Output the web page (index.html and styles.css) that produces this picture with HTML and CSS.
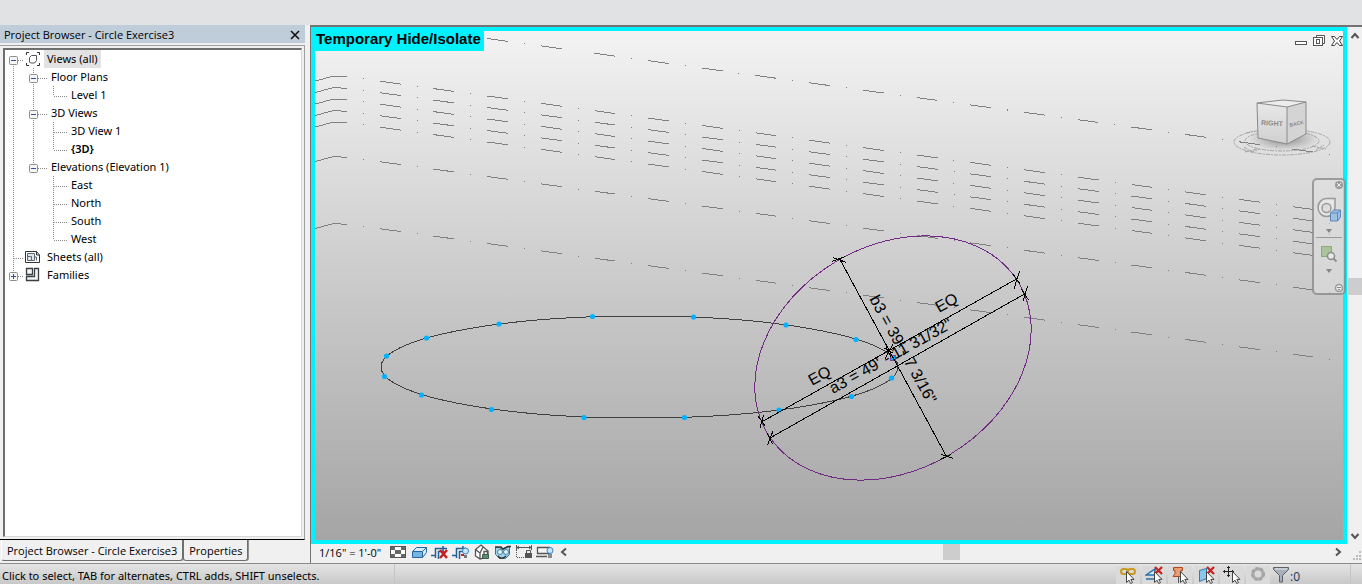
FILE: index.html
```html
<!DOCTYPE html>
<html lang="en">
<head>
    <meta charset="UTF-8">
    <meta name="viewport" content="width=device-width, initial-scale=1.0">
    <title>Circle Exercise3</title>
    <link rel="stylesheet" href="styles.css">
</head>
<body>
    <!-- Tree guide lines and shared icons -->
    <svg class="defs" width="0" height="0" aria-hidden="true">
        <defs>
            <g id="box">
                <rect x="5.5" y="6.5" width="8" height="8" rx="1" fill="#f6f6f6" stroke="#8e8e8e"/>
                <path d="M7 10.5h5" stroke="#3b4f9c"/>
            </g>
            <g id="cursor">
                <path d="M9.500 5.500v11l2.500-2.300 1.700 3.300 1.800-.9-1.700-3.200h3.200z" fill="#fff" stroke="#444"/>
            </g>
            <g id="redx">
                <path d="M10 1l7 7M17 1l-7 7" stroke="#c8201e" stroke-width="2.200"/>
            </g>
        </defs>
    </svg>

    <header class="ribbon"></header>

    <main class="workspace">
        <aside class="browser">
            <div class="browser-title">
                <h1>Project Browser - Circle Exercise3</h1>
                <button class="icon-btn close" aria-label="Close">
                    <svg width="10" height="10" viewBox="0 0 10 10"><path d="M1 1l8 8M9 1l-8 8" stroke="#111" stroke-width="1.600"/></svg>
                </button>
            </div>
            <div class="browser-frame">
                <ul class="tree">
                    <li>
                        <button class="guide" aria-label="Collapse Views"><svg width="20" height="18"><path class="dots" d="M9.500 14v4M14 10.500h6"/><use href="#box"/></svg></button>
                        <svg class="icon" width="18" height="18" viewBox="0 0 18 18"><path d="M5 2.500H2.500V5M13 2.500h2.500V5M5 15.500H2.500V13M13 15.500h2.500V13" fill="none" stroke="#333"/><path d="M5.500 7.500l2-2h5v5l-2 2.500h-4l-1-1z" fill="#fff" stroke="#555"/></svg>
                        <a class="selected" href="#">Views (all)</a>
                    </li>
                    <li>
                        <svg width="20" height="18"><path class="dots" d="M9.500 0v18"/></svg>
                        <button class="guide" aria-label="Collapse Floor Plans"><svg width="24" height="18"><path class="dots" d="M9.500 0v18M14 10.500h10"/><use href="#box"/></svg></button>
                        <a href="#">Floor Plans</a>
                    </li>
                    <li>
                        <svg width="44" height="18"><path class="dots" d="M9.500 0v18M29.500 0v18"/></svg>
                        <svg width="20" height="18"><path class="dots" d="M5.500 0v10M6 10.500h14"/></svg>
                        <a href="#">Level 1</a>
                    </li>
                    <li>
                        <svg width="20" height="18"><path class="dots" d="M9.500 0v18"/></svg>
                        <button class="guide" aria-label="Collapse 3D Views"><svg width="24" height="18"><path class="dots" d="M9.500 0v18M14 10.500h10"/><use href="#box"/></svg></button>
                        <a href="#">3D Views</a>
                    </li>
                    <li>
                        <svg width="44" height="18"><path class="dots" d="M9.500 0v18M29.500 0v18"/></svg>
                        <svg width="20" height="18"><path class="dots" d="M5.500 0v18M6 10.500h14"/></svg>
                        <a href="#">3D View 1</a>
                    </li>
                    <li>
                        <svg width="44" height="18"><path class="dots" d="M9.500 0v18M29.500 0v18"/></svg>
                        <svg width="20" height="18"><path class="dots" d="M5.500 0v10M6 10.500h14"/></svg>
                        <a class="current" href="#">{3D}</a>
                    </li>
                    <li>
                        <svg width="20" height="18"><path class="dots" d="M9.500 0v18"/></svg>
                        <button class="guide" aria-label="Collapse Elevations"><svg width="24" height="18"><path class="dots" d="M9.500 0v6M14 10.500h10"/><use href="#box"/></svg></button>
                        <a href="#">Elevations (Elevation 1)</a>
                    </li>
                    <li>
                        <svg width="44" height="18"><path class="dots" d="M9.500 0v18"/></svg>
                        <svg width="20" height="18"><path class="dots" d="M5.500 0v18M6 10.500h14"/></svg>
                        <a href="#">East</a>
                    </li>
                    <li>
                        <svg width="44" height="18"><path class="dots" d="M9.500 0v18"/></svg>
                        <svg width="20" height="18"><path class="dots" d="M5.500 0v18M6 10.500h14"/></svg>
                        <a href="#">North</a>
                    </li>
                    <li>
                        <svg width="44" height="18"><path class="dots" d="M9.500 0v18"/></svg>
                        <svg width="20" height="18"><path class="dots" d="M5.500 0v18M6 10.500h14"/></svg>
                        <a href="#">South</a>
                    </li>
                    <li>
                        <svg width="44" height="18"><path class="dots" d="M9.500 0v18"/></svg>
                        <svg width="20" height="18"><path class="dots" d="M5.500 0v10M6 10.500h14"/></svg>
                        <a href="#">West</a>
                    </li>
                    <li>
                        <svg width="20" height="18"><path class="dots" d="M9.500 0v18M10 10.500h10"/></svg>
                        <svg class="icon" width="18" height="18" viewBox="0 0 18 18"><path d="M1.500 3.500h11l3 3.500v7.500h-14z" fill="#fff" stroke="#333"/><path d="M12.500 3.500V7h3" fill="none" stroke="#333"/><path d="M3.500 5.500h7v7h-7zM3.500 8.500h4v4M10.500 9h2v3.500" fill="#dfe5ec" stroke="#5c6670"/></svg>
                        <a class="root" href="#">Sheets (all)</a>
                    </li>
                    <li>
                        <button class="guide" aria-label="Expand Families"><svg width="20" height="18"><path class="dots" d="M9.500 0v6M14 10.500h6"/><use href="#box"/><path d="M9.500 8v5" stroke="#3b4f9c"/></svg></button>
                        <svg class="icon" width="18" height="18" viewBox="0 0 18 18"><path d="M2.500 2.500h6v6h-6zM10.500 2.500h4v12h-12v-4h8z" fill="#f4f4f4" stroke="#3a3f46" stroke-width="1.300"/></svg>
                        <a class="root" href="#">Families</a>
                    </li>
                </ul>
            </div>
            <nav class="tabs">
                <button class="tab active">Project Browser - Circle Exercise3</button>
                <button class="tab">Properties</button>
            </nav>
        </aside>

        <section class="view">
            <div class="viewport">
                <svg class="drawing" viewBox="315 31 1028 509" preserveAspectRatio="xMinYMin slice">
                    <defs>
                        <g id="level">
                            <path d="M315 81L334 76L347 77"/>
                            <path class="dashdot" d="M347 76.700L1335 212.500" stroke-dashoffset="-16"/>
                        </g>
                        <linearGradient id="cubeLeft" x1="0" y1="0" x2="0" y2="1">
                            <stop offset="0" stop-color="#e8e8e8"/><stop offset="1" stop-color="#cfcfcf"/>
                        </linearGradient>
                        <radialGradient id="cubeShadow">
                            <stop offset="0" stop-color="#777" stop-opacity=".9"/><stop offset="1" stop-color="#999" stop-opacity="0"/>
                        </radialGradient>
                    </defs>

                    <!-- reference levels -->
                    <g class="levels">
                        <path class="dashdot first" d="M487 38.500L1335 155"/>
                        <use href="#level"/>
                        <use href="#level" y="11.500"/>
                        <use href="#level" y="23"/>
                        <use href="#level" y="34.500"/>
                        <use href="#level" y="46"/>
                        <use href="#level" y="80.500"/>
                        <use href="#level" y="147.500"/>
                    </g>

                    <!-- circles -->
                    <ellipse class="curve" cx="639.500" cy="367" rx="258.500" ry="51"/>
                    <g class="points">
                        <circle cx="592.500" cy="316.500" r="2.600"/><circle cx="693.500" cy="317" r="2.600"/>
                        <circle cx="786" cy="325" r="2.600"/><circle cx="856" cy="339.500" r="2.600"/>
                        <circle cx="891.500" cy="378" r="2.600"/><circle cx="851.500" cy="396.500" r="2.600"/>
                        <circle cx="779" cy="410" r="2.600"/><circle cx="684.500" cy="417.500" r="2.600"/>
                        <circle cx="584" cy="417.500" r="2.600"/><circle cx="491.500" cy="409.500" r="2.600"/>
                        <circle cx="421.500" cy="395" r="2.600"/><circle cx="384.500" cy="376.500" r="2.600"/>
                        <circle cx="386.500" cy="356" r="2.600"/><circle cx="426.500" cy="338" r="2.600"/>
                        <circle cx="499" cy="324" r="2.600"/>
                    </g>
                    <ellipse class="sketch" cx="893" cy="358" rx="146.500" ry="112" transform="rotate(-31 893 358)"/>
                    <rect class="center" x="890.500" y="355.500" width="5" height="5"/>

                    <!-- dimensions -->
                    <g class="dims">
                        <path d="M761.500 422L1016.500 279M770 438L1024.500 294M840 259.500L946.500 456.500"/>
                        <path d="M1019.500 271L1014 289M1013 274L1020 284M1027.500 286L1023 301M1021.500 289L1028.500 300"/>
                        <path d="M763.500 415L760 428M758 416L765 426M773 431L767.500 445M767 433L772.500 444"/>
                        <path d="M832 261.500L845 256.500M833 257.500L846.500 262.500M940 459.500L951.500 454.500M941 454.500L953.500 458.500"/>
                        <path d="M893 344L885 359M884 348L893 353M886 347L891 357"/>
                    </g>
                    <g class="dim-text">
                        <text transform="translate(939 313) rotate(-29)">EQ</text>
                        <text transform="translate(812 386) rotate(-29)">EQ</text>
                        <text transform="translate(833 394) rotate(-29)">a3 = 49' - 11 31/32"</text>
                        <text transform="translate(869 299) rotate(61)">b3 = 39' - 7 3/16"</text>
                    </g>

                    <!-- view cube -->
                    <g class="cube">
                        <ellipse cx="1284" cy="139" rx="36" ry="12" fill="url(#cubeShadow)"/>
                        <ellipse class="ring" cx="1282" cy="142" rx="48" ry="13"/>
                        <ellipse class="ring" cx="1282" cy="141" rx="37" ry="10"/>
                        <path class="ring" d="M1244 147l8 5 8-3M1245 152l12-3M1312 146l14 3M1316 150l8-5M1246 133l9-2"/>
                        <path d="M1257 103L1283 100L1306 102L1287 107Z" fill="#ededed"/>
                        <path d="M1257 103L1287 107V144L1258 138Z" fill="url(#cubeLeft)"/>
                        <path d="M1287 107L1306 102V134L1287 144Z" fill="#d4d4d4"/>
                        <path d="M1257 103L1283 100L1306 102L1287 107ZM1257 103L1258 138L1287 144L1306 134V102M1287 107V144" fill="none" stroke="#8a8a8a"/>
                        <text x="1261" y="125" transform="rotate(3 1261 125)">RIGHT</text>
                        <text class="side" x="1290" y="127" transform="rotate(-14 1290 127)">BACK</text>
                    </g>
                </svg>

                <div class="mode-label">Temporary Hide/Isolate</div>

                <div class="window-controls">
                    <button class="icon-btn" aria-label="Minimize"><svg width="14" height="14" viewBox="0 0 14 14"><rect x="1.500" y="7.500" width="11" height="3" fill="#fff" stroke="#555"/></svg></button>
                    <button class="icon-btn" aria-label="Restore"><svg width="14" height="14" viewBox="0 0 14 14"><path d="M4.500 3.500v-2h8v8h-2" fill="#fff" stroke="#555"/><rect x="1.500" y="3.500" width="9" height="8" fill="#fff" stroke="#555"/><rect x="4.500" y="5.500" width="3" height="4" fill="none" stroke="#555"/></svg></button>
                    <button class="icon-btn" aria-label="Close view"><svg width="14" height="14" viewBox="0 0 14 14"><path d="M1.500 2.500h3l2.500 3 2.500-3h3l-3 4.500 3 4.500h-3l-2.500-3-2.500 3h-3l3-4.500z" fill="#fff" stroke="#444"/></svg></button>
                </div>

                <div class="nav-bar">
                    <button class="icon-btn small" aria-label="Close navigation bar"><svg width="10" height="10" viewBox="0 0 10 10"><circle cx="5" cy="5" r="4" fill="#999"/><path d="M3 3l4 4M7 3l-4 4" stroke="#eee"/></svg></button>
                    <button class="icon-btn wheel" aria-label="Steering wheel"><svg width="26" height="28" viewBox="0 0 26 28"><path d="M10.500 2.500h8.500v9a8.500 9 0 1 1-8.500-9z" fill="#e6e6e6" stroke="#999" stroke-width="1.500"/><circle cx="10.500" cy="12" r="4.500" fill="#ddd" stroke="#999" stroke-width="1.500"/><path d="M14.500 17l3-3h7v7l-3 4h-7z" fill="#9dbfe3" stroke="#5d89b8"/><path d="M14.500 17h7v8M21.500 17l3-3" fill="none" stroke="#5d89b8"/></svg></button>
                    <button class="icon-btn drop" aria-label="Wheel options"><svg width="8" height="6" viewBox="0 0 8 6"><path d="M1 1h6l-3 4z" fill="#858585"/></svg></button>
                    <hr>
                    <button class="icon-btn zoom" aria-label="Zoom in region"><svg width="22" height="20" viewBox="0 0 22 20"><rect x="3.500" y="2.500" width="10" height="10" fill="#a9c39a" stroke="#8ca97d"/><circle cx="13" cy="12" r="3.500" fill="#e8e8e8" stroke="#8d8d8d" stroke-width="1.500"/><path d="M15.500 14.500l3 3" stroke="#8d8d8d" stroke-width="2"/></svg></button>
                    <button class="icon-btn drop" aria-label="Zoom options"><svg width="8" height="6" viewBox="0 0 8 6"><path d="M1 1h6l-3 4z" fill="#858585"/></svg></button>
                    <button class="icon-btn small last" aria-label="Navigation bar options"><svg width="10" height="10" viewBox="0 0 10 10"><circle cx="5" cy="5" r="3.500" fill="#eee" stroke="#999" stroke-width="1.500"/><path d="M3 4.500h4M4 6.500h2" stroke="#888"/></svg></button>
                </div>
            </div>

            <div class="scroll-v">
                <button class="icon-btn" aria-label="Scroll up"><svg width="10" height="8" viewBox="0 0 10 8"><path d="M1.500 6l3.500-4 3.500 4" fill="none" stroke="#555" stroke-width="2"/></svg></button>
                <div class="track"><span class="thumb"></span></div>
                <button class="icon-btn" aria-label="Scroll down"><svg width="10" height="8" viewBox="0 0 10 8"><path d="M1.500 2l3.500 4 3.500-4" fill="none" stroke="#555" stroke-width="2"/></svg></button>
            </div>

            <div class="view-bar">
                <button class="scale">1/16" = 1'-0"</button>
                <div class="view-tools">
                    <button class="icon-btn" aria-label="Detail level"><svg width="18" height="18" viewBox="0 0 18 18"><rect x="1.500" y="3.500" width="15" height="11" fill="#fff" stroke="#555"/><path d="M2 4h4v3H2zM12 4h4v3h-4zM6 7h6v4H6zM2 11h4v3H2zM12 11h4v3h-4z" fill="#666"/></svg></button>
                    <button class="icon-btn" aria-label="Visual style"><svg width="18" height="18" viewBox="0 0 18 18"><path d="M2.500 8.500l4-4h10v5l-4 5h-10z" fill="#d9ecfb" stroke="#24679f"/><path d="M3 9h9v5H3z" fill="#75b4e3"/><path d="M2.500 8.500h10v6M12.500 8.500l4-4" fill="none" stroke="#24679f"/></svg></button>
                    <button class="icon-btn" aria-label="Do not crop view"><svg width="20" height="18" viewBox="0 0 20 18"><path d="M1 12.500h4M5.500 15V5.500H17M8.500 16V8.500H14M13 3v9" fill="none" stroke="#245f91" stroke-width="1.500"/><path d="M10 7l7 8M17 7l-7 8" stroke="#c8201e" stroke-width="2.500"/></svg></button>
                    <button class="icon-btn" aria-label="Show crop region"><svg width="20" height="18" viewBox="0 0 20 18"><path d="M1 12.500h4M5.500 15V5.500H15M8.500 16V8.500H12M12 3v3" fill="none" stroke="#245f91" stroke-width="1.500"/><path d="M10 12h3" stroke="#c8201e" stroke-width="2"/><circle cx="14.500" cy="8" r="3" fill="#cfe6fa" stroke="#2d7fc4"/><path d="M13 12h3v3h-3z" fill="#777"/></svg></button>
                    <button class="icon-btn" aria-label="Unlocked 3D view"><svg width="20" height="18" viewBox="0 0 20 18"><path d="M3.500 6.500L9 2l7 6v6l-8 2-4.500-3zM3.500 6.500L8 10v6M8 10l3-6" fill="#fff" stroke="#555" stroke-width="1.300"/><path d="M10.500 11.500h6v4h-6z" fill="#5f8a72" stroke="#3f5f4e"/><path d="M12 11V8.500h3.500V11" fill="none" stroke="#555" stroke-width="1.300"/></svg></button>
                    <button class="icon-btn" aria-label="Temporary Hide/Isolate"><svg width="20" height="18" viewBox="0 0 20 18"><path d="M2.500 4.500h4l3 2 3-2 4-1v8l-4 4h-6l-4-4z" fill="#9fd4ea" stroke="#3d6f86"/><path d="M2 4h6l2 2 5-2.500h3M5 13c2 3 5 3 8 0" fill="none" stroke="#333" stroke-width="1.500"/><circle cx="7" cy="9" r="2.500" fill="#e2f5fc" stroke="#4a7d93"/><circle cx="13" cy="9" r="2.500" fill="#e2f5fc" stroke="#4a7d93"/></svg></button>
                    <button class="icon-btn" aria-label="Reveal constraints"><svg width="20" height="18" viewBox="0 0 20 18"><path d="M2.500 2v6M17.500 2v5M2 4.500h16M5 3l-2 1.500L5 6M15 3l2 1.500L15 6" fill="none" stroke="#555"/><path d="M2.500 9v6M3 14.500h7" stroke="#555" stroke-dasharray="1 1"/><path d="M11 10h7v5h-7z" fill="#555"/><path d="M12.500 10V7.500h4V10" fill="none" stroke="#555"/></svg></button>
                    <button class="icon-btn" aria-label="Reveal hidden elements"><svg width="20" height="18" viewBox="0 0 20 18"><path d="M2.500 4.500h12v6h-12zM1 13.500h11" fill="#f6f6f6" stroke="#555" stroke-width="1.300"/><circle cx="15" cy="7.500" r="3" fill="#cfe6fa" stroke="#2d7fc4"/><path d="M13 11h4v4h-4z" fill="#8a8a8a"/></svg></button>
                </div>
                <button class="icon-btn arrow" aria-label="Scroll left"><svg width="8" height="10" viewBox="0 0 8 10"><path d="M6 1.500l-4 3.500 4 3.500" fill="none" stroke="#555" stroke-width="2"/></svg></button>
                <div class="track"><span class="thumb"></span></div>
                <button class="icon-btn arrow" aria-label="Scroll right"><svg width="8" height="10" viewBox="0 0 8 10"><path d="M2 1.500l4 3.500-4 3.500" fill="none" stroke="#555" stroke-width="2"/></svg></button>
            </div>
            <svg class="grip" width="15" height="19" viewBox="0 0 15 19"><path d="M12 7h2v2h-2zM9 11h2v2H9zM12 11h2v2h-2zM6 14h2v2H6zM9 14h2v2H9zM12 14h2v2h-2z" fill="#bdbdbd"/></svg>
        </section>
    </main>

    <footer class="status">
        <p class="hint">Click to select, TAB for alternates, CTRL adds, SHIFT unselects.</p>
        <div class="status-tools">
            <button class="tool" aria-label="Select links"><svg width="18" height="18" viewBox="0 0 18 18"><g fill="none" stroke="#c99a1c" stroke-width="2"><rect x="2" y="3" width="7" height="5" rx="2.500"/><rect x="9" y="3" width="7" height="5" rx="2.500"/></g><use href="#cursor" x="-2"/></svg></button>
            <button class="tool" aria-label="Select underlay elements"><svg width="18" height="18" viewBox="0 0 18 18"><path d="M1 9l9-6v6zM1 13h9" fill="#d8ebf9" stroke="#2671ad" stroke-width="1.500"/><use href="#redx"/><use href="#cursor"/></svg></button>
            <button class="tool" aria-label="Select pinned elements"><svg width="18" height="18" viewBox="0 0 18 18"><path d="M2.500 1.500h9v3h-1.500v3l2 3h-10l2-3v-3H2.500z" fill="#e99b72" stroke="#b3471f"/><path d="M7.500 10.500V17" stroke="#555"/><use href="#cursor"/></svg></button>
            <button class="tool" aria-label="Select elements by face"><svg width="18" height="18" viewBox="0 0 18 18"><path d="M2.500 4.500l7-2v10l-7 3z" fill="#8cc6ec" stroke="#3179b0"/><use href="#redx"/><use href="#cursor"/></svg></button>
            <button class="tool" aria-label="Drag elements on selection"><svg width="18" height="18" viewBox="0 0 18 18"><path d="M5.500 0v11M0 5.500h11M4 2l1.500-1.500L7 2M4 9l1.500 1.500L7 9M2 4L.5 5.500 2 7M9 4l1.500 1.500L9 7" fill="none" stroke="#222"/><use href="#cursor"/></svg></button>
            <button class="tool" aria-label="Background processes"><svg width="18" height="18" viewBox="0 0 18 18"><circle cx="9" cy="8" r="5" fill="none" stroke="#aaa" stroke-width="3"/><circle cx="9" cy="8" r="6" fill="none" stroke="#a2a2a2" stroke-width="2" stroke-dasharray="3 2"/></svg></button>
            <button class="filter" aria-label="Filter"><svg width="18" height="18" viewBox="0 0 18 18"><path d="M1.500 1.500h15v2l-6 6V16h-3V9.500l-6-6z" fill="#a7afb8" stroke="#5a6068"/><path d="M3 3h12" stroke="#e7ebef"/></svg><span>:0</span></button>
        </div>
    </footer>
</body>
</html>
```

FILE: styles.css
```css
* {
    box-sizing: border-box;
}
body {
    margin: 0;
    height: 100vh;
    display: flex;
    flex-direction: column;
    overflow: hidden;
    background-color: #f0f0f0;
    color: #000;
    font-family: "Open Sans", "Noto Sans", sans-serif;
    font-size: 11px;
}
button {
    margin: 0;
    padding: 0;
    border: none;
    background: none;
    color: inherit;
    font: inherit;
    cursor: pointer;
}
svg {
    display: block;
    flex: none;
}
.defs {
    position: absolute;
}
.icon-btn {
    display: flex;
    align-items: center;
    justify-content: center;
}
.ribbon {
    height: 25px;
    background-color: #e1e2e4;
}
.workspace {
    flex: 1;
    min-height: 0;
    display: flex;
    gap: 5px;
}

/* Project browser */
.browser {
    width: 305px;
    display: flex;
    flex-direction: column;
}
.browser-title {
    height: 18px;
    display: flex;
    align-items: center;
    justify-content: space-between;
    padding: 1px 5px 0 4px;
    background-color: #bfcddb;
}
.browser-title h1 {
    margin: 0;
    font-size: 11px;
    font-weight: normal;
    line-height: 18px;
}
.browser-frame {
    flex: 1;
    min-height: 0;
    margin-top: 2px;
    padding: 2px 2px 2px 3px;
    display: flex;
    border-top: 1px solid #a0a0a0;
    border-right: 1px solid #a0a0a0;
    border-bottom: 1px solid #000;
}
.tree {
    flex: 1;
    margin: 0;
    padding: 0;
    list-style: none;
    background-color: #fff;
    border: 1px solid #d8d8d8;
    border-top: 2px solid #6e6e6e;
    border-left: 2px solid #6e6e6e;
    font-family: "Noto Sans", "Open Sans", sans-serif;
}
.tree li {
    height: 18px;
    display: flex;
    align-items: center;
    margin-left: -1px;
}
.tree a {
    padding: 0 3px;
    line-height: 18px;
    color: #000;
    text-decoration: none;
}
.tree .root {
    padding-left: 5px;
}
.tree .selected {
    margin-left: 2px;
    background-color: #e2e2e2;
}
.tree .current {
    font-weight: 600;
}
.dots {
    fill: none;
    stroke: #8c8c8c;
    stroke-dasharray: 1 1;
}
.tabs {
    height: 23px;
    padding: 0 0 2px 1px;
    display: flex;
}
.tab {
    padding: 0 5px;
    border: 1px solid #6e6e6e;
    border-top: none;
    border-radius: 0 0 3px 3px;
    box-shadow: 1px 0 0 #8f8f8f;
}
.tab.active {
    border-left-color: #fff;
}

/* 3D view */
.view {
    flex: 1;
    min-width: 0;
    display: grid;
    grid-template-columns: 1fr 15px;
    grid-template-rows: 1fr 19px;
    border-top: 2px solid #737373;
    border-left: 1px solid #737373;
}
.viewport {
    position: relative;
    min-width: 0;
    min-height: 0;
    border: 4px solid #00f2ff;
    background: linear-gradient(#f3f3f3, #cecece 45%, #a5a5a5);
}
.drawing {
    width: 100%;
    height: 100%;
}
.levels {
    fill: none;
    stroke: #808080;
    shape-rendering: crispEdges;
}
.dashdot {
    stroke-dasharray: 1 16.1 21 16.1;
}
.dashdot.first {
    stroke-dasharray: 21 16.1 1 16.1;
}
.curve {
    fill: none;
    stroke: #404040;
    shape-rendering: crispEdges;
}
.sketch {
    fill: none;
    stroke: #702a84;
    shape-rendering: crispEdges;
}
.points {
    fill: #00b2ff;
}
.center {
    fill: #00b2ff;
    stroke: #8040a0;
}
.dims {
    fill: none;
    stroke: #000;
    shape-rendering: crispEdges;
}
.dim-text {
    font-family: "Liberation Sans", Arial, sans-serif;
    font-size: 16px;
}
.cube .ring {
    fill: none;
    stroke: #a4a4a4;
    stroke-dasharray: 4 1 2 1;
}
.cube text {
    font-family: "Liberation Sans", Arial, sans-serif;
    font-size: 7px;
    font-weight: bold;
    fill: #8a8a8a;
}
.cube .side {
    font-size: 5px;
}
.mode-label {
    position: absolute;
    top: 0;
    left: 0;
    height: 20px;
    padding: 0 3px 0 1px;
    background-color: #00f2ff;
    font: bold 15px/16px "Liberation Sans", Arial, sans-serif;
}
.window-controls {
    position: absolute;
    top: 3px;
    right: -1px;
    display: flex;
    gap: 4px;
}
.nav-bar {
    position: absolute;
    top: 147px;
    right: -3px;
    width: 34px;
    height: 117px;
    display: flex;
    flex-direction: column;
    align-items: center;
    border: 2px solid rgba(110, 110, 110, 0.6);
    border-radius: 5px;
    background-color: rgba(225, 225, 225, 0.5);
}
.nav-bar .small {
    align-self: flex-end;
}
.nav-bar .last {
    margin-top: auto;
}
.nav-bar .wheel {
    margin-top: 6px;
}
.nav-bar .drop {
    margin-top: 4px;
}
.nav-bar .zoom {
    margin-top: 6px;
}
.nav-bar hr {
    width: 26px;
    margin: 3px 0 0;
    border: none;
    border-top: 1px solid #999;
}

/* Scroll bars */
.scroll-v {
    display: flex;
    flex-direction: column;
    padding: 5px 0 4px 1px;
}
.track {
    flex: 1;
    display: flex;
}
.scroll-v .track {
    flex-direction: column;
}
.track::before,
.track::after {
    content: "";
    flex: 1;
}
.thumb {
    width: 17px;
    background-color: #cdcdcd;
}
.scroll-v .thumb {
    width: auto;
    height: 17px;
}
.view-bar {
    display: flex;
    align-items: center;
    padding: 0 4px 3px 8px;
}
.view-bar .track {
    height: 16px;
}
.scale {
    width: 69px;
    text-align: left;
}
.view-tools {
    display: flex;
    gap: 1px;
    margin-right: 4px;
}
.view-tools .icon-btn {
    width: 20px;
}
.arrow {
    width: 10px;
}

/* Status bar */
.status {
    height: 21px;
    display: flex;
    align-items: center;
    justify-content: space-between;
    border-top: 1px solid #8b8b8b;
    background: linear-gradient(#e4e4e4, #c8c8c8);
}
.hint {
    width: 395px;
    margin: 0;
    padding: 3px 0 0 2px;
    font-family: "Noto Sans", "Open Sans", sans-serif;
    line-height: 17px;
    border-right: 1px solid #c4c4c4;
}
.status-tools {
    display: flex;
    align-self: stretch;
    gap: 2px;
    padding-top: 2px;
    margin-right: 11px;
    padding-right: 50px;
    border-right: 1px solid #c4c4c4;
}
.tool {
    width: 24px;
    display: flex;
    justify-content: center;
    background-color: #dadada;
}
.filter {
    display: flex;
    font-size: 12px;
}
.filter span {
    padding-top: 2px;
    color: #12345a;
}
```
